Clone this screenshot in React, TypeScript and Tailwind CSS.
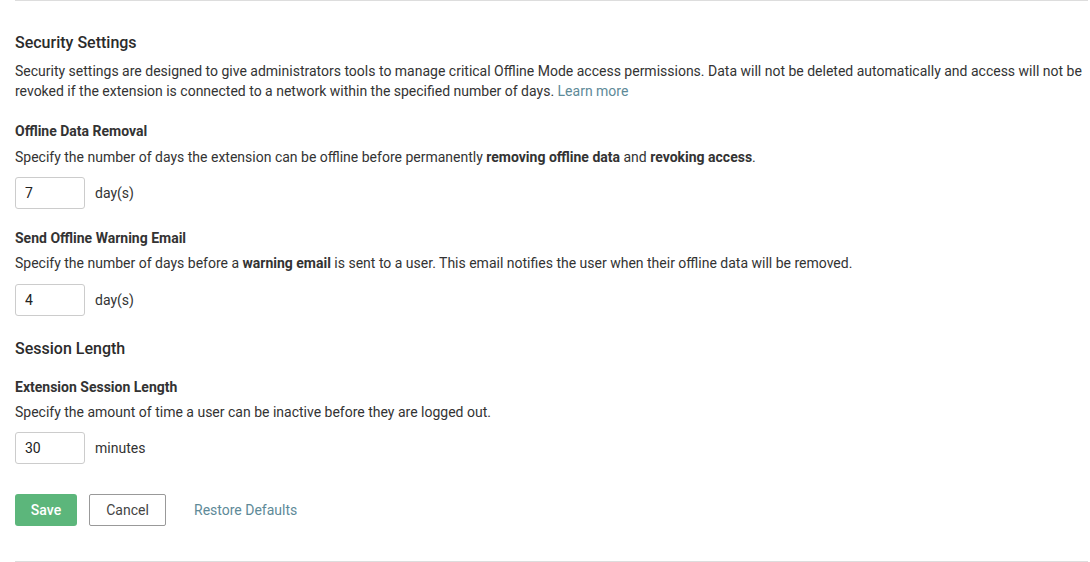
import React, { useState } from 'react';

const DaysField: React.FC<{ value: string; unit: string; onChange: (v: string) => void }> = ({ value, unit, onChange }) => (
  <div className="flex items-center gap-[10px]">
    <input
      value={value}
      onChange={(e) => onChange(e.target.value)}
      className="w-[70px] h-[32px] border border-[#cccccc] rounded-[3px] px-[9px] text-[14px] text-[#222] outline-none"
    />
    <span className="text-[14px] text-[#333]">{unit}</span>
  </div>
);

const App: React.FC = () => {
  const [removal, setRemoval] = useState('7');
  const [warning, setWarning] = useState('4');
  const [session, setSession] = useState('30');

  return (
    <div className="w-[1090px] h-[562px] bg-white overflow-hidden text-[#333]" style={{ fontFamily: 'Roboto, "Liberation Sans", sans-serif' }}>
      <div className="ml-[15px] mr-[2px] border-t border-[#dddddd]">
        <h2 className="mt-[30px] text-[16px] leading-[24px] font-medium text-[#2b2b2b]">Security Settings</h2>
        <p className="mt-[6px] text-[14px] leading-[20px]">
          Security settings are designed to give administrators tools to manage critical Offline Mode access permissions. Data will not be deleted automatically and access will not be revoked if the extension is connected to a network within the specified number of days.{' '}
          <a href="#" className="text-[#5e8a98]">Learn more</a>
        </p>

        <h3 className="mt-[21px] text-[14px] leading-[18px] font-bold">Offline Data Removal</h3>
        <p className="mt-[7px] text-[14px] leading-[20px]">
          Specify the number of days the extension can be offline before permanently <b>removing offline data</b> and <b>revoking access</b>.
        </p>
        <div className="mt-[10px]">
          <DaysField value={removal} unit="day(s)" onChange={setRemoval} />
        </div>

        <h3 className="mt-[20px] text-[14px] leading-[18px] font-bold">Send Offline Warning Email</h3>
        <p className="mt-[6px] text-[14px] leading-[20px]">
          Specify the number of days before a <b>warning email</b> is sent to a user. This email notifies the user when their offline data will be removed.
        </p>
        <div className="mt-[11px]">
          <DaysField value={warning} unit="day(s)" onChange={setWarning} />
        </div>

        <h2 className="mt-[21px] text-[16px] leading-[24px] font-medium text-[#2b2b2b]">Session Length</h2>

        <h3 className="mt-[17px] text-[14px] leading-[18px] font-bold">Extension Session Length</h3>
        <p className="mt-[6px] text-[14px] leading-[20px]">
          Specify the amount of time a user can be inactive before they are logged out.
        </p>
        <div className="mt-[10px]">
          <DaysField value={session} unit="minutes" onChange={setSession} />
        </div>

        <div className="mt-[30px] flex items-center h-[32px]">
          <button className="w-[62px] h-[32px] rounded-[3px] bg-[#5cb67b] text-white text-[14px] font-medium">Save</button>
          <button className="ml-[12px] w-[77px] h-[32px] rounded-[2px] border border-[#999] bg-white text-[14px] text-[#444]">Cancel</button>
          <button className="ml-[28px] text-[14px] text-[#5e8a98]">Restore Defaults</button>
        </div>

        <div className="mt-[35px] border-t border-[#dddddd]" />
      </div>
    </div>
  );
};

export default App;
